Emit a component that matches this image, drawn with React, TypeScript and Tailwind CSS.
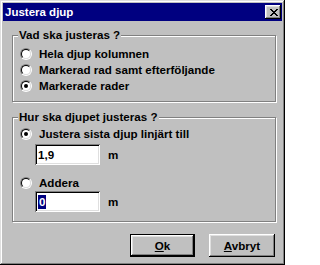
import React from "react";

const raised =
  "shadow-[inset_-1px_-1px_#000,inset_1px_1px_#fff,inset_-2px_-2px_#808080,inset_2px_2px_#dfdfdf]";
const sunken =
  "shadow-[inset_1px_1px_#808080,inset_-1px_-1px_#fff,inset_2px_2px_#000,inset_-2px_-2px_#dfdfdf]";

function Radio({ checked }: { checked?: boolean }) {
  return (
    <div className="w-[12px] h-[12px] rounded-full border border-t-[#808080] border-l-[#808080] border-b-white border-r-white shrink-0">
      <div className="w-[10px] h-[10px] rounded-full border border-t-black border-l-black border-b-[#dfdfdf] border-r-[#dfdfdf] bg-white flex items-center justify-center">
        {checked && <div className="w-[4px] h-[4px] rounded-full bg-black" />}
      </div>
    </div>
  );
}

function RadioRow({ label, checked }: { label: string; checked?: boolean }) {
  return (
    <div className="h-[16px] flex items-center gap-[7px]">
      <Radio checked={checked} />
      <span className="leading-[16px]">{label}</span>
    </div>
  );
}

function Group({
  title,
  className,
  children,
}: {
  title: string;
  className: string;
  children: React.ReactNode;
}) {
  return (
    <div
      className={`relative ml-[9px] w-[264px] border border-[#808080] shadow-[inset_1px_1px_#fff,1px_1px_#fff] ${className}`}
    >
      <span className="absolute left-[5px] top-[-8px] px-[1px] bg-[#c0c0c0] leading-[13px]">
        {title}
      </span>
      {children}
    </div>
  );
}

function CloseGlyph() {
  return (
    <svg width="8" height="7" viewBox="0 0 8 7" shapeRendering="crispEdges">
      <path
        d="M0 0h2v1H0zM6 0h2v1H6zM1 1h2v1H1zM5 1h2v1H5zM2 2h4v1H2zM3 3h2v1H3zM2 4h4v1H2zM1 5h2v1H1zM5 5h2v1H5zM0 6h2v1H0zM6 6h2v1H6z"
        fill="#000"
      />
    </svg>
  );
}

function Field({ children }: { children: React.ReactNode }) {
  return (
    <div className={`w-[65px] h-[21px] bg-white ${sunken} flex items-center pl-[3px]`}>
      {children}
    </div>
  );
}

export default function App() {
  return (
    <div
      className={`w-[285px] h-[265px] bg-[#c0c0c0] p-[3px] flex flex-col text-black text-[11.6px] font-bold shadow-[inset_-1px_-1px_#000,inset_1px_1px_#dfdfdf,inset_-2px_-2px_#808080,inset_2px_2px_#fff]`}
      style={{ fontFamily: '"Liberation Sans", Arial, sans-serif' }}
    >
      {/* title bar */}
      <div className="h-[18px] bg-[#000080] flex items-center justify-between pl-[2px] pr-[1px]">
        <span className="text-white text-[11.5px] leading-[18px]">Justera djup</span>
        <button className={`w-[16px] h-[14px] bg-[#c0c0c0] ${raised} flex items-center justify-center pl-[1px]`}>
          <CloseGlyph />
        </button>
      </div>

      <Group title="Vad ska justeras ?" className="mt-[14px] h-[67px] pt-[10px] pl-[7px]">
        <RadioRow label="Hela djup kolumnen" />
        <RadioRow label="Markerad rad samt efterföljande" />
        <RadioRow label="Markerade rader" checked />
      </Group>

      <Group title="Hur ska djupet justeras ?" className="mt-[15px] h-[105px] pt-[8px] pl-[7px]">
        <RadioRow label="Justera sista djup linjärt till" checked />
        <div className="mt-[2px] ml-[15px] flex items-center gap-[8px]">
          <Field>
            <span className="leading-[14px]">1,9</span>
          </Field>
          <span>m</span>
        </div>
        <div className="mt-[10px]">
          <RadioRow label="Addera" />
        </div>
        <div className="ml-[15px] flex items-center gap-[8px]">
          <Field>
            <span className="leading-[14px] bg-[#000080] text-white px-[1px]">0</span>
          </Field>
          <span>m</span>
        </div>
      </Group>

      <div className="mt-[12px] flex justify-end gap-[14px] pr-[7px]">
        <button className="w-[65px] h-[23px] border border-black bg-[#c0c0c0]">
          <div className={`w-full h-full ${raised} flex items-center justify-center`}>
            <span>
              <span className="underline">O</span>k
            </span>
          </div>
        </button>
        <button className={`w-[66px] h-[23px] bg-[#c0c0c0] ${raised} flex items-center justify-center`}>
          <span>
            <span className="underline">A</span>vbryt
          </span>
        </button>
      </div>
    </div>
  );
}
